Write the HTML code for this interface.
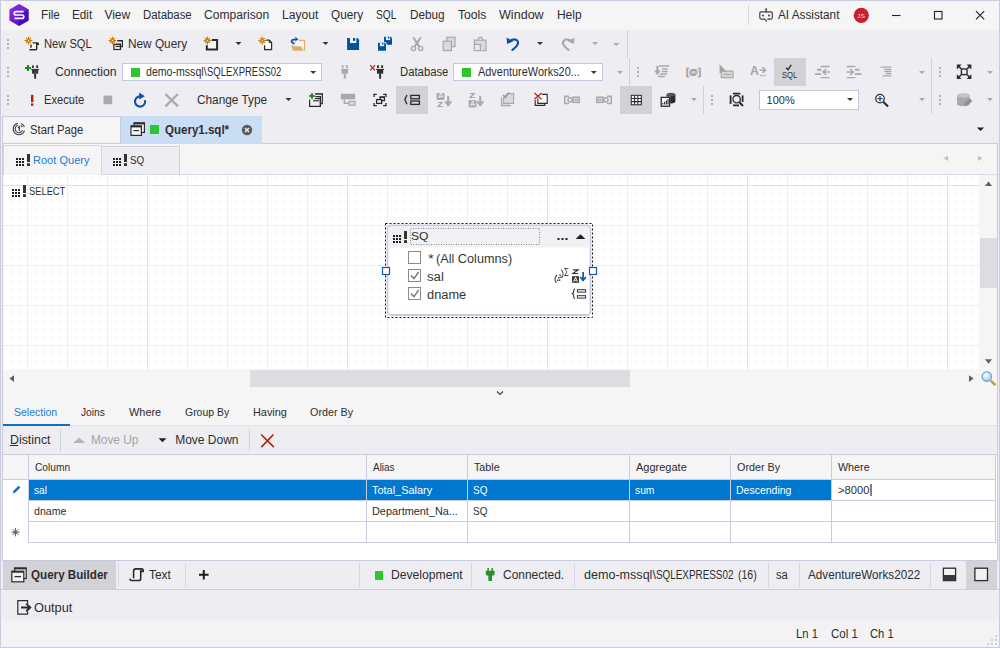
<!DOCTYPE html>
<html lang="en"><head><meta charset="utf-8"><title>dbForge Studio - Query1.sql</title>
<style>
html,body{margin:0;padding:0;background:#eeeef2;}
#w{position:relative;width:1000px;height:648px;overflow:hidden;font-family:"Liberation Sans",sans-serif;}
#w div,#w span,#w svg{position:absolute;}
#w span{white-space:pre;line-height:1;transform-origin:0 0;}
#w svg{overflow:visible;}
</style></head><body><div id="w">
<div style="left:0px;top:0px;width:1000px;height:648px;background-color:#c9cbdf;"></div>
<div style="left:1px;top:1px;width:998px;height:29px;background-color:#f5f5f6;"></div>
<div style="left:1px;top:30px;width:998px;height:86px;background-color:#eeeef2;"></div>
<div style="left:1px;top:116px;width:998px;height:28px;background-color:#eeeef2;"></div>
<div style="left:2px;top:116px;width:119px;height:28px;background-color:#c9cbdf;"></div>
<div style="left:3px;top:117px;width:117px;height:26px;background-color:#f5f5f5;"></div>
<div style="left:2px;top:143px;width:996px;height:1px;background-color:#c9cbdf;"></div>
<div style="left:121px;top:116px;width:141px;height:28px;background-color:#c9def5;"></div>
<div style="left:1px;top:116px;width:1px;height:445px;background-color:#eeeef2;"></div>
<div style="left:998px;top:116px;width:1px;height:445px;background-color:#eeeef2;"></div>
<div style="left:2px;top:116px;width:1px;height:445px;background-color:#c9cbdf;"></div>
<div style="left:997px;top:143px;width:1px;height:418px;background-color:#c9cbdf;"></div>
<div style="left:3px;top:144px;width:994px;height:417px;background-color:#f5f5f5;"></div>
<div style="left:3px;top:144px;width:994px;height:31px;background-color:#f5f5f5;"></div>
<div style="left:3px;top:145px;width:99px;height:30px;background-color:#d4d6e6;"></div>
<div style="left:4px;top:146px;width:97px;height:29px;background-color:#f5f5f5;"></div>
<div style="left:102px;top:146px;width:78px;height:28px;background-color:#cfd1e2;"></div>
<div style="left:102px;top:147px;width:77px;height:27px;background-color:#eeeef2;"></div>
<div style="left:101px;top:174px;width:896px;height:1px;background-color:#d9dbea;"></div>
<div style="left:3px;top:175px;width:977px;height:195px;background-color:#ffffff;background-image:linear-gradient(to right,#e2e2ea 1px,transparent 1px),linear-gradient(to bottom,#e2e2ea 1px,transparent 1px),linear-gradient(to right,#eeeef3 1px,transparent 1px),linear-gradient(to bottom,#eeeef3 1px,transparent 1px),linear-gradient(to right,#f8f8fb 1px,transparent 1px),linear-gradient(to bottom,#f8f8fb 1px,transparent 1px);background-size:200px 200px,200px 200px,40px 40px,40px 40px,8px 8px,8px 8px;background-position:144px 10px,144px 10px,24px 10px,24px 10px,0px 2px,0px 2px;"></div>
<div style="left:980px;top:175px;width:17px;height:195px;background-color:#f5f5f5;"></div>
<div style="left:980px;top:238px;width:17px;height:50px;background-color:#dcdce2;"></div>
<div style="left:3px;top:370px;width:994px;height:56px;background-color:#f5f5f5;"></div>
<div style="left:250px;top:370px;width:380px;height:17px;background-color:#dcdce2;"></div>
<div style="left:3px;top:425px;width:994px;height:1px;background-color:#e2e2ea;"></div>
<div style="left:3px;top:424px;width:67px;height:2px;background-color:#0e70c0;"></div>
<div style="left:3px;top:426px;width:994px;height:29px;background-color:#eeeef2;"></div>
<div style="left:60px;top:429px;width:1px;height:23px;background-color:#d0d1de;"></div>
<div style="left:249px;top:429px;width:1px;height:22px;background-color:#d0d1de;"></div>
<div style="left:3px;top:454px;width:994px;height:107px;background-color:#ffffff;"></div>
<div style="left:3px;top:454px;width:994px;height:1px;background-color:#c9cbdf;"></div>
<div style="left:3px;top:455px;width:993px;height:24px;background-color:#f5f5f5;"></div>
<div style="left:3px;top:479px;width:993px;height:1px;background-color:#c9cbdf;"></div>
<div style="left:28px;top:480px;width:803px;height:20px;background-color:#0078d0;"></div>
<div style="left:28px;top:500px;width:968px;height:1px;background-color:#c9cbdf;"></div>
<div style="left:28px;top:521px;width:968px;height:1px;background-color:#c9cbdf;"></div>
<div style="left:28px;top:542px;width:968px;height:1px;background-color:#c9cbdf;"></div>
<div style="left:28px;top:455px;width:1px;height:88px;background-color:#c9cbdf;"></div>
<div style="left:366px;top:455px;width:1px;height:88px;background-color:#c9cbdf;"></div>
<div style="left:467px;top:455px;width:1px;height:88px;background-color:#c9cbdf;"></div>
<div style="left:629px;top:455px;width:1px;height:88px;background-color:#c9cbdf;"></div>
<div style="left:730px;top:455px;width:1px;height:88px;background-color:#c9cbdf;"></div>
<div style="left:831px;top:455px;width:1px;height:88px;background-color:#c9cbdf;"></div>
<div style="left:995px;top:455px;width:1px;height:88px;background-color:#c9cbdf;"></div>
<div style="left:2px;top:560px;width:996px;height:1px;background-color:#c9cbdf;"></div>
<div style="left:1px;top:561px;width:998px;height:28px;background-color:#eeeef2;"></div>
<div style="left:3px;top:561px;width:113px;height:28px;background-color:#d2d2d7;"></div>
<div style="left:966px;top:561px;width:31px;height:28px;background-color:#d2d2d7;"></div>
<div style="left:2px;top:589px;width:996px;height:1px;background-color:#c9cbdf;"></div>
<div style="left:118px;top:563px;width:1px;height:24px;background-color:#d7d8e4;"></div>
<div style="left:185px;top:563px;width:1px;height:24px;background-color:#d7d8e4;"></div>
<div style="left:359px;top:563px;width:1px;height:24px;background-color:#d7d8e4;"></div>
<div style="left:471px;top:563px;width:1px;height:24px;background-color:#d7d8e4;"></div>
<div style="left:574px;top:563px;width:1px;height:24px;background-color:#d7d8e4;"></div>
<div style="left:768px;top:563px;width:1px;height:24px;background-color:#d7d8e4;"></div>
<div style="left:799px;top:563px;width:1px;height:24px;background-color:#d7d8e4;"></div>
<div style="left:930px;top:563px;width:1px;height:24px;background-color:#d7d8e4;"></div>
<div style="left:1px;top:590px;width:998px;height:30px;background-color:#eeeef2;"></div>
<div style="left:1px;top:620px;width:998px;height:27px;background-color:#f3f3f5;"></div>
<div style="left:748px;top:5px;width:1px;height:20px;background-color:#d5d6e2;"></div>
<div style="left:627px;top:30px;width:1px;height:28px;background-color:#d0d1de;"></div>
<div style="left:629px;top:58px;width:1px;height:28px;background-color:#d0d1de;"></div>
<div style="left:703px;top:86px;width:1px;height:28px;background-color:#d0d1de;"></div>
<div style="left:931px;top:58px;width:1px;height:56px;background-color:#d0d1de;"></div>
<div style="left:774px;top:58px;width:32px;height:28px;background-color:#d2d2d6;"></div>
<div style="left:396px;top:86px;width:32px;height:28px;background-color:#d2d2d6;"></div>
<div style="left:620px;top:86px;width:32px;height:28px;background-color:#d2d2d6;"></div>
<div style="left:122px;top:63px;width:200px;height:18px;background-color:#c3c6e0;"></div>
<div style="left:123px;top:64px;width:198px;height:16px;background-color:#ffffff;"></div>
<div style="left:453px;top:63px;width:150px;height:18px;background-color:#c3c6e0;"></div>
<div style="left:454px;top:64px;width:148px;height:16px;background-color:#ffffff;"></div>
<div style="left:759px;top:90px;width:100px;height:20px;background-color:#c3c6e0;"></div>
<div style="left:760px;top:91px;width:98px;height:18px;background-color:#ffffff;"></div>
<div style="left:131px;top:68px;width:9px;height:9px;background-color:#2ec62e;"></div>
<div style="left:462px;top:68px;width:9px;height:9px;background-color:#2ec62e;"></div>
<div style="left:150px;top:125px;width:9px;height:9px;background-color:#2ec62e;"></div>
<div style="left:374.5px;top:570.5px;width:8.5px;height:9px;background-color:#2ec62e;"></div>
<svg style="left:0;top:0" width="1000" height="648" viewBox="0 0 1000 648"><circle cx="861.3" cy="15.3" r="7.6" fill="#c8202f"/>
<rect x="436.7" y="93.1" width="7.7" height="6.7" fill="#a4a4a4"/><rect x="468.7" y="100.2" width="7.6" height="7.2" fill="#a4a4a4"/>
<rect x="387.5" y="225.5" width="203" height="89.5" rx="3.5" fill="#ffffff" stroke="#c9cbdd" stroke-width="1.8"/>
<path d="M388.3 247.5 V229 Q388.3 226.3 391 226.3 H587 Q589.7 226.3 589.7 229 V247.5 Z" fill="#f1f1f3"/></svg>
<span style="left:40.71px;top:8.84px;font-size:12px;color:#2d2d2d;transform:scaleX(0.9771);">File</span>
<span style="left:71.91px;top:8.84px;font-size:12px;color:#2d2d2d;transform:scaleX(0.9764);">Edit</span>
<span style="left:104.40px;top:8.84px;font-size:12px;color:#2d2d2d;">View</span>
<span style="left:142.93px;top:8.84px;font-size:12px;color:#2d2d2d;transform:scaleX(0.9479);">Database</span>
<span style="left:203.90px;top:8.84px;font-size:12px;color:#2d2d2d;transform:scaleX(1.0077);">Comparison</span>
<span style="left:281.89px;top:8.84px;font-size:12px;color:#2d2d2d;transform:scaleX(1.0102);">Layout</span>
<span style="left:330.71px;top:8.84px;font-size:12px;color:#2d2d2d;transform:scaleX(0.9820);">Query</span>
<span style="left:376.29px;top:8.84px;font-size:12px;color:#2d2d2d;transform:scaleX(0.8494);">SQL</span>
<span style="left:410.21px;top:8.84px;font-size:12px;color:#2d2d2d;transform:scaleX(0.9781);">Debug</span>
<span style="left:458.19px;top:8.84px;font-size:12px;color:#2d2d2d;transform:scaleX(1.0137);">Tools</span>
<span style="left:499.37px;top:8.84px;font-size:12px;color:#2d2d2d;transform:scaleX(1.0471);">Window</span>
<span style="left:556.90px;top:8.84px;font-size:12px;color:#2d2d2d;">Help</span>
<span style="left:777.71px;top:8.84px;font-size:12px;color:#2d2d2d;transform:scaleX(0.9792);">AI Assistant</span>
<span style="left:857.12px;top:12.62px;font-size:6px;color:#f6d4d6;transform:scaleX(1.1261);">JS</span>
<span style="left:43.94px;top:37.84px;font-size:12px;color:#2d2d2d;transform:scaleX(0.9287);">New SQL</span>
<span style="left:127.81px;top:37.84px;font-size:12px;color:#2d2d2d;transform:scaleX(0.9845);">New Query</span>
<span style="left:54.99px;top:65.84px;font-size:12px;color:#2d2d2d;transform:scaleX(1.0145);">Connection</span>
<span style="left:146.37px;top:65.84px;font-size:12px;color:#2d2d2d;transform:scaleX(0.8823);">demo-mssql\</span>
<span style="left:206.73px;top:65.84px;font-size:12px;color:#2d2d2d;transform:scaleX(0.7910);">SQLEXPRESS02</span>
<span style="left:400.23px;top:65.84px;font-size:12px;color:#2d2d2d;transform:scaleX(0.9421);">Database</span>
<span style="left:477.65px;top:65.84px;font-size:12px;color:#2d2d2d;transform:scaleX(0.9111);">AdventureWorks20...</span>
<span style="left:43.94px;top:93.84px;font-size:12px;color:#2d2d2d;transform:scaleX(0.9294);">Execute</span>
<span style="left:197.01px;top:93.84px;font-size:12px;color:#2d2d2d;transform:scaleX(0.9849);">Change Type</span>
<span style="left:766.60px;top:94.69px;font-size:11px;color:#2d2d2d;">100%</span>
<span style="left:30.04px;top:123.84px;font-size:12px;color:#2d2d2d;transform:scaleX(0.9400);">Start Page</span>
<span style="left:165.22px;top:123.84px;font-size:12px;color:#2e2e2e;transform:scaleX(0.9610);font-weight:700;">Query1.sql*</span>
<span style="left:33.10px;top:154.69px;font-size:11px;color:#1c7cd6;transform:scaleX(1.0044);">Root Query</span>
<span style="left:130.06px;top:154.69px;font-size:11px;color:#2d2d2d;transform:scaleX(0.8990);">SQ</span>
<span style="left:29.29px;top:185.69px;font-size:11px;color:#2d2d2d;transform:scaleX(0.8482);">SELECT</span>
<span style="left:411.27px;top:231.27px;font-size:11.5px;color:#2d2d2d;transform:scaleX(1.0466);">SQ</span>
<span style="left:428.26px;top:252.84px;font-size:12px;color:#363636;transform:scaleX(1.2415);">*</span>
<span style="left:436.07px;top:252.84px;font-size:12px;color:#363636;transform:scaleX(1.0581);">(All Columns)</span>
<span style="left:427.04px;top:270.84px;font-size:12px;color:#363636;transform:scaleX(1.0949);">sal</span>
<span style="left:427.06px;top:288.84px;font-size:12px;color:#363636;transform:scaleX(1.0680);">dname</span>
<span style="left:14.13px;top:406.69px;font-size:11px;color:#1c7cd6;transform:scaleX(0.9544);">Selection</span>
<span style="left:81.44px;top:406.69px;font-size:11px;color:#2d2d2d;transform:scaleX(0.9304);">Joins</span>
<span style="left:128.90px;top:406.69px;font-size:11px;color:#2d2d2d;transform:scaleX(0.9936);">Where</span>
<span style="left:184.93px;top:406.69px;font-size:11px;color:#2d2d2d;transform:scaleX(0.9512);">Group By</span>
<span style="left:252.71px;top:406.69px;font-size:11px;color:#2d2d2d;transform:scaleX(0.9898);">Having</span>
<span style="left:310.21px;top:406.69px;font-size:11px;color:#2d2d2d;transform:scaleX(0.9792);">Order By</span>
<span style="left:9.98px;top:433.84px;font-size:12px;color:#2d2d2d;transform:scaleX(1.0294);text-decoration:none">Distinct</span>
<span style="left:91.21px;top:433.84px;font-size:12px;color:#a2a2a2;transform:scaleX(0.9869);">Move Up</span>
<span style="left:175.20px;top:433.84px;font-size:12px;color:#2d2d2d;">Move Down</span>
<span style="left:35.04px;top:461.69px;font-size:11px;color:#2d2d2d;transform:scaleX(0.9260);">Column</span>
<span style="left:373.06px;top:461.69px;font-size:11px;color:#2d2d2d;transform:scaleX(0.9059);">Alias</span>
<span style="left:474.02px;top:461.69px;font-size:11px;color:#2d2d2d;transform:scaleX(0.9735);">Table</span>
<span style="left:636.00px;top:461.69px;font-size:11px;color:#2d2d2d;">Aggregate</span>
<span style="left:737.01px;top:461.69px;font-size:11px;color:#2d2d2d;transform:scaleX(0.9792);">Order By</span>
<span style="left:838.01px;top:461.69px;font-size:11px;color:#2d2d2d;transform:scaleX(0.9751);">Where</span>
<span style="left:34.45px;top:484.69px;font-size:11px;color:#ffffff;transform:scaleX(0.9173);">sal</span>
<span style="left:372.40px;top:484.69px;font-size:11px;color:#ffffff;transform:scaleX(0.9943);">Total_Salary</span>
<span style="left:473.46px;top:484.69px;font-size:11px;color:#ffffff;transform:scaleX(0.9053);">SQ</span>
<span style="left:635.44px;top:484.69px;font-size:11px;color:#ffffff;transform:scaleX(0.9335);">sum</span>
<span style="left:736.43px;top:484.69px;font-size:11px;color:#ffffff;transform:scaleX(0.9536);">Descending</span>
<span style="left:838.39px;top:484.69px;font-size:11px;color:#2d2d2d;transform:scaleX(1.0160);">&gt;8000</span>
<span style="left:34.42px;top:505.69px;font-size:11px;color:#2d2d2d;transform:scaleX(0.9631);">dname</span>
<span style="left:372.41px;top:505.69px;font-size:11px;color:#2d2d2d;transform:scaleX(0.9893);">Department_Na...</span>
<span style="left:473.46px;top:505.69px;font-size:11px;color:#2d2d2d;transform:scaleX(0.9053);">SQ</span>
<span style="left:30.92px;top:568.84px;font-size:12px;color:#2e2e2e;transform:scaleX(0.9690);font-weight:700;">Query Builder</span>
<span style="left:149.20px;top:568.84px;font-size:12px;color:#2d2d2d;transform:scaleX(0.9947);">Text</span>
<span style="left:390.69px;top:568.84px;font-size:12px;color:#2d2d2d;transform:scaleX(1.0125);">Development</span>
<span style="left:502.70px;top:568.84px;font-size:12px;color:#2d2d2d;transform:scaleX(0.9953);">Connected.</span>
<span style="left:583.87px;top:568.84px;font-size:12px;color:#2d2d2d;transform:scaleX(1.0468);">demo-mssql\</span>
<span style="left:656.31px;top:568.84px;font-size:12px;color:#2d2d2d;transform:scaleX(0.8229);">SQLEXPRESS02</span>
<span style="left:737.97px;top:568.84px;font-size:12px;color:#2d2d2d;transform:scaleX(0.8761);">(16)</span>
<span style="left:776.14px;top:568.84px;font-size:12px;color:#2d2d2d;transform:scaleX(0.9300);">sa</span>
<span style="left:807.62px;top:568.84px;font-size:12px;color:#2d2d2d;transform:scaleX(0.9741);">AdventureWorks2022</span>
<span style="left:33.66px;top:601.84px;font-size:12px;color:#2d2d2d;transform:scaleX(1.0657);">Output</span>
<span style="left:796.44px;top:627.84px;font-size:12px;color:#2d2d2d;transform:scaleX(0.9375);">Ln 1</span>
<span style="left:830.73px;top:627.84px;font-size:12px;color:#2d2d2d;transform:scaleX(0.9566);">Col 1</span>
<span style="left:869.94px;top:627.84px;font-size:12px;color:#2d2d2d;transform:scaleX(0.9346);">Ch 1</span>
<span style="left:686.22px;top:67.16px;font-size:9.5px;color:#9c9c9c;transform:scaleX(0.9683);font-weight:700;-webkit-text-stroke:0.35px #9c9c9c;">[@]</span>
<span style="left:750.21px;top:65.42px;font-size:12.5px;color:#a4a4a4;transform:scaleX(0.9855);font-weight:700;">A</span>
<span style="left:782.26px;top:70.60px;font-size:8.5px;color:#333;transform:scaleX(0.8992);">SQL</span>
<span style="left:437.52px;top:93.30px;font-size:6.5px;color:#ececee;transform:scaleX(1.1269);font-weight:700;">A</span>
<span style="left:436.89px;top:100.75px;font-size:7.5px;color:#9c9c9c;transform:scaleX(1.3497);font-weight:700;">Z</span>
<span style="left:468.89px;top:91.55px;font-size:7.5px;color:#9c9c9c;transform:scaleX(1.3497);font-weight:700;">Z</span>
<span style="left:469.52px;top:101.00px;font-size:6.5px;color:#ececee;transform:scaleX(1.1269);font-weight:700;">A</span>
<span style="left:563.53px;top:268.14px;font-size:10px;color:#2a2a2a;transform:scaleX(0.7758);">Σ</span>
<svg style="left:0;top:0" width="1000" height="648" viewBox="0 0 1000 648"><g transform="translate(9,4)"><defs><linearGradient id="lg" x1="0" y1="0" x2="1" y2="1"><stop offset="0" stop-color="#9b2fe8"/><stop offset="1" stop-color="#3a0cb8"/></linearGradient></defs><polygon points="10,0 19.6,5.5 19.6,16.5 10,22 0.4,16.5 0.4,5.5" fill="url(#lg)"/><polygon points="10,0 19.6,5.5 10,11" fill="#7a22dc" opacity=".55"/><polygon points="10,11 19.6,5.5 19.6,16.5 10,22" fill="#3408b0" opacity=".55"/><path d="M14.6 7.6 H7 Q5.2 7.6 5.2 9.3 Q5.2 11 7 11 H13 Q14.8 11 14.8 12.7 Q14.8 14.4 13 14.4 H5.4" fill="none" stroke="#fff" stroke-width="1.7"/></g>
<g transform="translate(759,8)"><g fill="none" stroke="#3e3e3e" stroke-width="1.15" stroke-linecap="round"><path d="M8.7 11.1 H11.8 Q13.3 11.1 13.3 9.6 V5.4 Q13.3 3.9 11.8 3.9 H2.3 Q0.8 3.9 0.8 5.4 V9.6 Q0.8 11.1 2.3 11.1 H5.6 L7.6 13.1"/><line x1="7.1" y1="3.9" x2="7.1" y2="1.6"/></g><circle cx="7.1" cy="1.2" r="1" fill="#3e3e3e"/><circle cx="4" cy="7.4" r="1" fill="#3e3e3e"/><circle cx="10" cy="7.4" r="1" fill="#3e3e3e"/></g>
<line x1="892" y1="15.5" x2="900.5" y2="15.5" stroke="#222" stroke-width="1.1"/>
<rect x="934.5" y="11.5" width="7.5" height="7.5" fill="none" stroke="#222" stroke-width="1.1"/>
<path d="M976 11.2 L984.2 19.4 M984.2 11.2 L976 19.4" stroke="#222" stroke-width="1.15" fill="none"/>
<rect x="7" y="39" width="2" height="2" fill="#b2b2ba"/>
<rect x="7" y="43" width="2" height="2" fill="#b2b2ba"/>
<rect x="7" y="47" width="2" height="2" fill="#b2b2ba"/>
<g transform="translate(24,36)"><g stroke="#c8790c" stroke-width="1.25" fill="none" stroke-linecap="round"><line x1="4.50" y1="1.10" x2="4.50" y2="7.90"/><line x1="1.10" y1="4.50" x2="7.90" y2="4.50"/><line x1="2.43" y1="2.43" x2="6.57" y2="6.57"/><line x1="6.57" y1="2.43" x2="2.43" y2="6.57"/></g><circle cx="4.5" cy="4.5" r="0.7" fill="#f4ead8"/><rect x="7.4" y="7.2" width="5" height="6" fill="#f6f6f6"/><path d="M7 11.8 V8.6 M8.6 6.9 H13.2 Q14.5 6.9 14.5 8.4 H13 M12.7 7.2 V13 Q12.7 13.7 11.8 13.7 H5.4" fill="none" stroke="#2b2b2b" stroke-width="1.4"/></g>
<g transform="translate(108,36)"><g stroke="#c8790c" stroke-width="1.25" fill="none" stroke-linecap="round"><line x1="4.50" y1="1.10" x2="4.50" y2="7.90"/><line x1="1.10" y1="4.50" x2="7.90" y2="4.50"/><line x1="2.43" y1="2.43" x2="6.57" y2="6.57"/><line x1="6.57" y1="2.43" x2="2.43" y2="6.57"/></g><circle cx="4.5" cy="4.5" r="0.7" fill="#f4ead8"/><g fill="none" stroke="#2b2b2b" stroke-width="1.2"><path d="M14.4 4.6 V10.6 H13"/><rect x="5.9" y="8.3" width="6.6" height="5.2"/><line x1="7.6" y1="10.4" x2="12" y2="10.4"/></g><rect x="9.3" y="4" width="5.7" height="1.5" fill="#2b2b2b"/><rect x="8" y="7.7" width="5.1" height="1.3" fill="#2b2b2b"/></g>
<g transform="translate(204,36)"><rect x="3" y="4" width="10" height="9.6" fill="#f4f4f6"/><g stroke="#c8790c" stroke-width="1.25" fill="none" stroke-linecap="round"><line x1="3.40" y1="1.20" x2="3.40" y2="8.00"/><line x1="0.00" y1="4.60" x2="6.80" y2="4.60"/><line x1="1.33" y1="2.53" x2="5.47" y2="6.67"/><line x1="5.47" y1="2.53" x2="1.33" y2="6.67"/></g><circle cx="3.4" cy="4.6" r="0.7" fill="#f4ead8"/><path d="M7.8 4 H13.1 V13.6 H2.8 V9.2" fill="none" stroke="#2b2b2b" stroke-width="2"/></g>
<polygon points="235.5,42 241.5,42 238.5,45.1" fill="#333333"/>
<g transform="translate(258,36)"><g stroke="#c8790c" stroke-width="1.25" fill="none" stroke-linecap="round"><line x1="4.30" y1="1.10" x2="4.30" y2="7.90"/><line x1="0.90" y1="4.50" x2="7.70" y2="4.50"/><line x1="2.23" y1="2.43" x2="6.37" y2="6.57"/><line x1="6.37" y1="2.43" x2="2.23" y2="6.57"/></g><circle cx="4.3" cy="4.5" r="0.7" fill="#f4ead8"/><path d="M6.6 9.2 V13.6 H13.6 V6.6 L11.2 4.2 H8.2" fill="#fafafa" stroke="#2b2b2b" stroke-width="1.2"/><path d="M11.2 4.2 V6.6 H13.6" fill="none" stroke="#2b2b2b" stroke-width="1"/></g>
<g transform="translate(290,36)"><path d="M9 4.4 H13.6 Q14.5 4.4 14.5 5.3 V14.6" fill="none" stroke="#d9b068" stroke-width="1.3"/><rect x="6" y="5.4" width="7.8" height="5" fill="#f5f5f5"/><polygon points="1.2,10.2 10.8,10.2 13.6,14.8 3,14.8" fill="#d9b068"/><rect x="2" y="9" width="1.2" height="1.6" fill="#d9b068"/><path d="M3.8 7.4 Q0.4 6 2.2 4.2 Q3.4 3.2 6.4 3.3" fill="none" stroke="#0a50a8" stroke-width="1.7" stroke-linecap="round"/><polygon points="4.7,0.6 8.4,3.2 4.7,5.8 6.3,3.2" fill="#0a50a8"/></g>
<polygon points="322.5,42 328.5,42 325.5,45.1" fill="#333333"/>
<g transform="translate(345,36)"><path d="M2.1 2 H12.3 L14.1 3.8 V14 H2.1 Z" fill="#044fa0"/><rect x="4.98" y="2" width="6.36" height="5.04" fill="#f6f6f9"/><rect x="7.98" y="2" width="2.16" height="2.88" fill="#044fa0"/></g>
<g transform="translate(377,36)"><path d="M7 0.7 H13.8 L15 1.9 V8.7 H7 Z" fill="#044fa0"/><rect x="8.92" y="0.7" width="4.24" height="3.36" fill="#f6f6f9"/><rect x="10.92" y="0.7" width="1.44" height="1.92" fill="#044fa0"/><path d="M0.4 6 H8.6 L9.8 7.4 V15.4 H0.4 Z" fill="#f2f2f6"/><path d="M1 6.8 H7.8 L9 8 V14.8 H1 Z" fill="#044fa0"/><rect x="2.92" y="6.8" width="4.24" height="3.36" fill="#f6f6f9"/><rect x="4.92" y="6.8" width="1.44" height="1.92" fill="#044fa0"/></g>
<g transform="translate(409,36)"><g fill="none" stroke="#a9a9a9"><path d="M4.2 1.4 L10.4 10.6 M11.8 1.4 L5.6 10.6" stroke-width="1.9"/><circle cx="4.5" cy="12.5" r="2.1" stroke-width="1.4"/><circle cx="11.6" cy="12.5" r="2.1" stroke-width="1.4"/></g></g>
<g transform="translate(441,36)"><rect x="5.8" y="1.2" width="8.2" height="9.4" fill="#dadada" stroke="#a9a9a9" stroke-width="1.2"/><rect x="2.2" y="5.2" width="8.2" height="9.4" fill="#dadada" stroke="#a9a9a9" stroke-width="1.2"/></g>
<g transform="translate(473,36)"><rect x="1.4" y="4.2" width="11.6" height="10.4" fill="#dadada"/><path d="M1.4 8 V4.2 H13 V14.6 H8.4" fill="none" stroke="#a9a9a9" stroke-width="1.2"/><path d="M5.2 4 Q5.2 1 7.4 1 Q9.6 1 9.6 4" fill="#dadada" stroke="#a9a9a9" stroke-width="1.1"/><rect x="1.4" y="8.4" width="6" height="6.2" fill="#e9e9ec" stroke="#a9a9a9" stroke-width="1.2"/></g>
<g transform="translate(505,36)"><path d="M4.4 5.4 Q9.4 1.6 12.4 4.8 Q15 8.6 7.4 13.8" fill="none" stroke="#0e4f9e" stroke-width="2.1" stroke-linecap="round"/><polygon points="1.6,1.4 2,8 8.2,5.6" fill="#0e4f9e"/></g>
<polygon points="537,42 543,42 540,45.1" fill="#333333"/>
<g transform="translate(576,36)"><g transform="scale(-1,1)"><path d="M4.4 5.4 Q9.4 1.6 12.4 4.8 Q15 8.6 7.4 13.8" fill="none" stroke="#a9a9a9" stroke-width="2.1" stroke-linecap="round"/><polygon points="1.6,1.4 2,8 8.2,5.6" fill="#a9a9a9"/></g></g>
<polygon points="592,42 598,42 595,45.1" fill="#a9a9a9"/>
<polygon points="613.3,43 619.3,43 616.3,46.1" fill="#a9a9a9"/>
<rect x="7" y="67" width="2" height="2" fill="#b2b2ba"/>
<rect x="7" y="71" width="2" height="2" fill="#b2b2ba"/>
<rect x="7" y="75" width="2" height="2" fill="#b2b2ba"/>
<g transform="translate(24,64)"><path d="M4 1 V7 M1 4 H7" stroke="#1e8a1e" stroke-width="2" fill="none"/><rect x="8" y="1.2" width="1.9" height="2.7" rx="0.5" fill="#383838"/><rect x="12.2" y="1.2" width="1.9" height="2.7" rx="0.5" fill="#383838"/><rect x="7.1" y="4.9" width="8" height="1.1" fill="#383838"/><rect x="8" y="5.8" width="6.2" height="3.9" fill="#383838"/><rect x="10.1" y="9.6" width="2" height="5.1" fill="#383838"/></g>
<g transform="translate(337,64)"><rect x="4.7" y="1.2" width="1.9" height="2.7" rx="0.5" fill="#a9a9a9"/><rect x="8.9" y="1.2" width="1.9" height="2.7" rx="0.5" fill="#a9a9a9"/><rect x="3.8" y="4.9" width="8" height="1.1" fill="#a9a9a9"/><rect x="4.7" y="5.8" width="6.2" height="3.9" fill="#a9a9a9"/><rect x="6.8" y="9.6" width="2" height="5.1" fill="#a9a9a9"/></g>
<g transform="translate(369,64)"><path d="M1.2 1.2 L6 6.4 M6 1.2 L1.2 6.4" stroke="#b5200d" stroke-width="1.2" fill="none"/><rect x="8" y="1.2" width="1.9" height="2.7" rx="0.5" fill="#2e2e2e"/><rect x="12.2" y="1.2" width="1.9" height="2.7" rx="0.5" fill="#2e2e2e"/><rect x="7.1" y="4.9" width="8" height="1.1" fill="#2e2e2e"/><rect x="8" y="5.8" width="6.2" height="3.9" fill="#2e2e2e"/><rect x="10.1" y="9.6" width="2" height="5.1" fill="#2e2e2e"/></g>
<polygon points="310.2,71 316.2,71 313.2,74.1" fill="#3a3a3a"/>
<polygon points="590.8,71 596.8,71 593.8,74.1" fill="#3a3a3a"/>
<polygon points="617,71 623,71 620,74.1" fill="#a9a9a9"/>
<rect x="637" y="67" width="2" height="2" fill="#b2b2ba"/>
<rect x="637" y="71" width="2" height="2" fill="#b2b2ba"/>
<rect x="637" y="75" width="2" height="2" fill="#b2b2ba"/>
<g transform="translate(654,64)"><g stroke="#a9a9a9" fill="none"><path d="M3.4 1.8 V8.4" stroke-width="2.1"/><path d="M5 2 H15.2 M8 5 H13.5 M8 7.5 H14 M6 10 H13 M4 12.5 H11" stroke-width="1.35"/></g><polygon points="0.2,6.6 6.6,6.6 3.4,11.2" fill="#a9a9a9"/></g>
<g transform="translate(718,64)"><rect x="3.4" y="7.2" width="11.6" height="6.4" fill="#dadada" stroke="#a9a9a9" stroke-width="1.3"/><line x1="6" y1="10.4" x2="13" y2="10.4" stroke="#a9a9a9" stroke-width="1.3"/><polygon points="1.6,0.6 1.6,9.8 4,7.6 8.2,7.2" fill="#a2a2a2"/></g>
<g transform="translate(750,64)"><path d="M9.6 6.2 H15 M12.6 3.4 L15.4 6.2 L12.6 9" fill="none" stroke="#a9a9a9" stroke-width="1.6"/><path d="M10 11.5 H15.6" stroke="#a9a9a9" stroke-width="1.3" stroke-dasharray="1.3 0.9"/></g>
<g transform="translate(782,64)"><path d="M4.2 3.8 L6 5.8 L9.2 0.8" fill="none" stroke="#222" stroke-width="1.3"/></g>
<g stroke="#a9a9a9" fill="none"><path d="M820.6 66.5 H829.6 M820.6 77.6 H829.6" stroke-width="1.4"/><path d="M817 69.8 H821.2 M814.8 74.1 H821.2" stroke-width="1.9"/><path d="M823.4 72 H829.8 M826.2 69 L823 72 L826.2 75" stroke-width="1.6"/></g>
<g stroke="#a9a9a9" fill="none"><path d="M846.7 66.5 H855.4 M846.7 77.6 H855.4" stroke-width="1.4"/><path d="M855 69.8 H859.4 M855 74.1 H861.4" stroke-width="1.9"/><path d="M846.5 72 H853 M850 69 L853.3 72 L850 75" stroke-width="1.6"/></g>
<g stroke="#a9a9a9" fill="none" stroke-width="1.3"><path d="M880.5 67.2 H891.4 M884.2 69.4 H891.4 M884.2 71.5 H891.4 M886 73.7 H891.4 M882.6 75.9 H891.4"/></g>
<polygon points="919,71 925,71 922,74.1" fill="#a9a9a9"/>
<rect x="939" y="67" width="2" height="2" fill="#b2b2ba"/>
<rect x="939" y="71" width="2" height="2" fill="#b2b2ba"/>
<rect x="939" y="75" width="2" height="2" fill="#b2b2ba"/>
<g transform="translate(956,64)"><rect x="5.4" y="5" width="5.6" height="5.6" fill="none" stroke="#2b2b2b" stroke-width="1.4"/><g stroke="#2b2b2b" stroke-width="1.6" fill="none"><path d="M5 4.6 L2.2 1.8 M11.4 4.6 L14.2 1.8 M5 11 L2.2 13.8 M11.4 11 L14.2 13.8"/></g><g fill="#2b2b2b"><polygon points="0.8,0.6 5.6,0.6 0.8,5.4"/><polygon points="15.4,0.6 10.6,0.6 15.4,5.4"/><polygon points="0.8,15 5.6,15 0.8,10.2"/><polygon points="15.4,15 10.6,15 15.4,10.2"/></g></g>
<polygon points="987,71 993,71 990,74.1" fill="#a9a9a9"/>
<rect x="7" y="95" width="2" height="2" fill="#b2b2ba"/>
<rect x="7" y="99" width="2" height="2" fill="#b2b2ba"/>
<rect x="7" y="103" width="2" height="2" fill="#b2b2ba"/>
<g transform="translate(24,92)"><rect x="7" y="2.8" width="2.4" height="7.4" fill="#b5200d"/><rect x="7" y="11.4" width="2.4" height="2.4" fill="#b5200d"/></g>
<rect x="103.5" y="95.6" width="8.7" height="8.6" fill="#a9a9a9"/>
<path d="M145 100.2 A5.1 5.1 0 1 1 139.6 96.4" fill="none" stroke="#0b50a2" stroke-width="2.1"/><polygon points="139.2,92.6 144.8,96.2 139.2,99.6" fill="#0b50a2"/>
<g transform="translate(164,92)"><path d="M1.4 2 L14 14.4 M14 2 L1.4 14.4" stroke="#a9a9a9" stroke-width="2.2" fill="none"/></g>
<polygon points="285.5,98 291.5,98 288.5,101.1" fill="#333333"/>
<g transform="translate(308,92)"><g fill="none" stroke="#2b2b2b" stroke-width="1.2"><path d="M14.3 1.4 V11.6 H12.8"/><path d="M7.4 4.6 H12.4 V14.2"/><rect x="1.6" y="6.6" width="10.8" height="7.8"/><line x1="5" y1="8.8" x2="11" y2="8.8" stroke-width="1.1"/></g><rect x="7" y="1.2" width="7.9" height="1.5" fill="#2b2b2b"/><rect x="0" y="0.4" width="7" height="7.2" fill="#eeeef2"/><path d="M4 1.2 V6.8 M1.2 4 H6.8" stroke="#1e8a1e" stroke-width="2" fill="none"/></g>
<g transform="translate(340,92)"><rect x="0.8" y="1.8" width="14.4" height="5.6" fill="#a9a9a9"/><path d="M4.4 7.4 V11.2 H8.6" fill="none" stroke="#a9a9a9" stroke-width="1.4"/><rect x="9" y="9.4" width="6" height="3.8" fill="#dadada" stroke="#a9a9a9" stroke-width="1.2"/></g>
<g transform="translate(372,92)"><g fill="none" stroke="#2b2b2b" stroke-width="1.3"><path d="M2 5 V2.3 H4.8 M11.2 2.3 H14 V5 M14 11 V13.7 H11.2 M4.8 13.7 H2 V11"/><rect x="8" y="5" width="4.4" height="3.6" fill="#f4f4f6"/><rect x="4.6" y="7.6" width="5" height="3.8" fill="#f4f4f6"/></g><rect x="8" y="4.6" width="4.4" height="1.3" fill="#2b2b2b"/></g>
<g transform="translate(404,92)"><g fill="none" stroke="#2b2b2b" stroke-width="1.3"><path d="M3 3 L0.8 7.6 L3 12.2"/><rect x="6.8" y="3.4" width="8.6" height="3.4"/><rect x="6.8" y="9" width="8.6" height="3.4"/></g></g>
<g transform="translate(436,92)"><path d="M12.2 3.8 V12 M9.2 9.4 L12.2 13 L15.2 9.4" fill="none" stroke="#a9a9a9" stroke-width="2.1"/></g>
<g transform="translate(468,92)"><path d="M12.2 3.8 V12 M9.2 9.4 L12.2 13 L15.2 9.4" fill="none" stroke="#a9a9a9" stroke-width="2.1"/></g>
<g transform="translate(500,92)"><path d="M1.4 5.4 V13.6 H11 M3.6 11.4 H13.6 V1.6 H7.4 L3.6 5.4 Z" fill="#dadada" stroke="#a9a9a9" stroke-width="1.1"/><path d="M3 3 L5.4 5.6 L9 0.4" fill="none" stroke="#9a9a9a" stroke-width="1.5"/></g>
<g transform="translate(532,92)"><g fill="#fafafa" stroke="#2b2b2b" stroke-width="1.1"><path d="M3.2 8 V13.4 H12.8 V11.6"/><path d="M5.8 6.4 V11.4 H15.2 V2.4 H10"/></g><path d="M2.4 1 L9.6 7.2 M9.6 1 L2.4 7.2" stroke="#b5200d" stroke-width="1.15" fill="none"/></g>
<g transform="translate(564,92)"><g fill="none" stroke="#a9a9a9" stroke-width="1.5"><path d="M5 4.2 H0.8 V11.4 H5"/><circle cx="6" cy="7.8" r="2.1"/><rect x="9" y="5.2" width="6.2" height="5.2" fill="#dadada"/><line x1="10.6" y1="7.8" x2="13.6" y2="7.8"/></g></g>
<g transform="translate(612,92)"><g transform="scale(-1,1)"><g fill="none" stroke="#a9a9a9" stroke-width="1.5"><path d="M5 4.2 H0.8 V11.4 H5"/><circle cx="6" cy="7.8" r="2.1"/><rect x="9" y="5.2" width="6.2" height="5.2" fill="#dadada"/><line x1="10.6" y1="7.8" x2="13.6" y2="7.8"/></g></g></g>
<g transform="translate(628,92)"><rect x="2.4" y="2.6" width="11.6" height="10.8" fill="#fff"/><g fill="none" stroke="#2b2b2b" stroke-width="1.1"><rect x="3.2" y="3.3" width="10.1" height="9.5"/><path d="M6.6 3.3 V12.8 M9.9 3.3 V12.8 M3.2 6.5 H13.3 M3.2 9.6 H13.3"/></g></g>
<g transform="translate(660,92)"><path d="M6.6 2.6 V9.6 Q6.6 11.4 11 11.4 Q15.4 11.4 15.4 9.6 V2.6 Z" fill="#2b2b2b"/><ellipse cx="11" cy="2.6" rx="4.4" ry="1.8" fill="#555"/><rect x="0.6" y="4.6" width="9.6" height="10" fill="#eeeef2"/><rect x="1.2" y="5.4" width="8.4" height="8.8" fill="#fff" stroke="#2b2b2b" stroke-width="1.3"/><path d="M2.8 12.6 V11 M4.6 12.6 V9.8 M6.4 12.6 V8.4 M8 12.6 V7" stroke="#2b2b2b" stroke-width="1.1"/></g>
<polygon points="691,98 697,98 694,101.1" fill="#a9a9a9"/>
<rect x="711" y="95" width="2" height="2" fill="#b2b2ba"/>
<rect x="711" y="99" width="2" height="2" fill="#b2b2ba"/>
<rect x="711" y="103" width="2" height="2" fill="#b2b2ba"/>
<g transform="translate(728,92)"><g fill="none" stroke="#2b2b2b"><path d="M2.6 3.4 V12" stroke-width="1.8"/><path d="M14.6 3.4 V10" stroke-width="1.8"/><path d="M5 1.6 H12.4 M5 13.4 H11" stroke-width="1.6"/><circle cx="8.6" cy="7.2" r="3.7" stroke-width="1.3" fill="#eeeef2"/><path d="M11.2 10 L15 14" stroke-width="1.9"/></g></g>
<polygon points="847,98 853,98 850,101.1" fill="#3a3a3a"/>
<g transform="translate(873,92)"><circle cx="7" cy="6.6" r="4.3" fill="#fafafa" stroke="#2b2b2b" stroke-width="1.2"/><path d="M10.2 9.8 L15 14.6" stroke="#2b2b2b" stroke-width="2.1"/><path d="M7 4 V9.2 M4.4 6.6 H9.6" stroke="#0e58b0" stroke-width="1.4"/></g>
<polygon points="919,98 925,98 922,101.1" fill="#a9a9a9"/>
<rect x="939" y="95" width="2" height="2" fill="#b2b2ba"/>
<rect x="939" y="99" width="2" height="2" fill="#b2b2ba"/>
<rect x="939" y="103" width="2" height="2" fill="#b2b2ba"/>
<g transform="translate(956,92)"><path d="M1 3.4 V11.6 Q1 14.2 7.4 14.2 Q13.8 14.2 13.8 11.6 V3.4 Z" fill="#a9a9a9"/><ellipse cx="7.4" cy="3.4" rx="6.4" ry="2.4" fill="#c4c4c4"/><rect x="8" y="8.6" width="8" height="3.6" fill="#8e8e8e" transform="rotate(-38 12 10.4)"/></g>
<polygon points="987,98 993,98 990,101.1" fill="#a9a9a9"/>
<path d="M17.79 123.23 A5.8 5.8 0 1 0 24.52 130.69 M21.17 123.52 A5.8 5.8 0 0 1 24.38 126.73 M17.83 125.29 A3.8 3.8 0 1 0 22.52 130.32 M20.78 125.54 A3.8 3.8 0 0 1 22.29 127.00" fill="none" stroke="#3c3c3c" stroke-width="1.05"/><path d="M17.9 127.6 L19.3 126.8 V131" fill="none" stroke="#2a2a2a" stroke-width="1.1"/>
<g transform="translate(130,122)"><g fill="#f8f8fa" stroke="#2b2b2b" stroke-width="1.2"><rect x="4" y="0.8" width="10.4" height="9.6"/><rect x="1" y="3.8" width="10.4" height="9.6"/></g><rect x="4" y="0.8" width="10.4" height="1.6" fill="#2b2b2b"/><rect x="1" y="3.8" width="10.4" height="1.6" fill="#2b2b2b"/><line x1="3.4" y1="8.6" x2="9" y2="8.6" stroke="#2b2b2b" stroke-width="1.2"/></g>
<circle cx="247" cy="130" r="5.2" fill="#5a5a5a"/><path d="M245 128 L249 132 M249 128 L245 132" stroke="#e8eef8" stroke-width="1.5"/>
<polygon points="976.9,127.5 984.1,127.5 980.5,130.9" fill="#1e1e1e"/>
<g transform="translate(16,154)"><g fill="#1e1e1e"><rect x="0" y="4" width="2" height="2"/><rect x="0" y="7" width="2" height="2"/><rect x="0" y="10" width="2" height="2"/><rect x="3" y="4" width="2" height="2"/><rect x="3" y="7" width="2" height="2"/><rect x="3" y="10" width="2" height="2"/><rect x="6" y="4" width="2" height="2"/><rect x="6" y="7" width="2" height="2"/><rect x="6" y="10" width="2" height="2"/></g><rect x="11" y="0" width="3" height="8" fill="#333"/><rect x="11" y="9.2" width="3" height="2.8" fill="#333"/></g>
<g transform="translate(113,154)"><g fill="#1e1e1e"><rect x="0" y="4" width="2" height="2"/><rect x="0" y="7" width="2" height="2"/><rect x="0" y="10" width="2" height="2"/><rect x="3" y="4" width="2" height="2"/><rect x="3" y="7" width="2" height="2"/><rect x="3" y="10" width="2" height="2"/><rect x="6" y="4" width="2" height="2"/><rect x="6" y="7" width="2" height="2"/><rect x="6" y="10" width="2" height="2"/></g><rect x="11" y="0" width="3" height="8" fill="#333"/><rect x="11" y="9.2" width="3" height="2.8" fill="#333"/></g>
<g transform="translate(12,185)"><g fill="#1e1e1e"><rect x="0" y="4" width="2" height="2"/><rect x="0" y="7" width="2" height="2"/><rect x="0" y="10" width="2" height="2"/><rect x="3" y="4" width="2" height="2"/><rect x="3" y="7" width="2" height="2"/><rect x="3" y="10" width="2" height="2"/><rect x="6" y="4" width="2" height="2"/><rect x="6" y="7" width="2" height="2"/><rect x="6" y="10" width="2" height="2"/></g><rect x="11" y="0" width="3" height="8" fill="#333"/><rect x="11" y="9.2" width="3" height="2.8" fill="#333"/></g>
<g transform="translate(393,231)"><g fill="#1e1e1e"><rect x="0" y="4" width="2" height="2"/><rect x="0" y="7" width="2" height="2"/><rect x="0" y="10" width="2" height="2"/><rect x="3" y="4" width="2" height="2"/><rect x="3" y="7" width="2" height="2"/><rect x="3" y="10" width="2" height="2"/><rect x="6" y="4" width="2" height="2"/><rect x="6" y="7" width="2" height="2"/><rect x="6" y="10" width="2" height="2"/></g><rect x="11" y="0" width="3" height="8" fill="#333"/><rect x="11" y="9.2" width="3" height="2.8" fill="#333"/></g>
<polygon points="948,155.5 948,161 943.6,158.2" fill="#c2c2c2"/><polygon points="978,155.5 978,161 982.4,158.2" fill="#c2c2c2"/>
<polygon points="985,186 992,186 988.5,181.4" fill="#606060"/><polygon points="985,359.2 992,359.2 988.5,363.8" fill="#606060"/>
<polygon points="14,375.2 14,382 9.4,378.6" fill="#606060"/><polygon points="969,375.2 969,382 973.6,378.6" fill="#606060"/>
<defs><radialGradient id="mg" cx=".4" cy=".35" r=".7"><stop offset="0" stop-color="#fff"/><stop offset="1" stop-color="#9cc4ea"/></radialGradient></defs><path d="M990.6 380.6 L995.4 385.2" stroke="#c89a3a" stroke-width="2.4"/><circle cx="986.8" cy="376.6" r="4.7" fill="url(#mg)" stroke="#6f9fd0" stroke-width="1.2"/>
<path d="M497 391.6 L500 394.4 L503 391.6" fill="none" stroke="#444" stroke-width="1.3"/>
<rect x="385.5" y="223.5" width="207" height="94" fill="none" stroke="#111" stroke-width="1" stroke-dasharray="2 2"/>
<rect x="410.5" y="228.5" width="129" height="16" fill="none" stroke="#8c8c8c" stroke-width="1" stroke-dasharray="1 1.5"/>
<rect x="557.5" y="238" width="2" height="2" fill="#1e1e1e"/>
<rect x="561.5" y="238" width="2" height="2" fill="#1e1e1e"/>
<rect x="565.5" y="238" width="2" height="2" fill="#1e1e1e"/>
<polygon points="575.6,239 585.4,239 580.5,234.2" fill="#1e1e1e"/>
<rect x="408.5" y="251.5" width="12" height="12" fill="#fff" stroke="#8a8a8a" stroke-width="1"/>
<rect x="408.5" y="269.5" width="12" height="12" fill="#fff" stroke="#8a8a8a" stroke-width="1"/>
<rect x="408.5" y="287.5" width="12" height="12" fill="#fff" stroke="#8a8a8a" stroke-width="1"/>
<path d="M411 275.6 L414 278.6 L418.6 272" fill="none" stroke="#7c7c7c" stroke-width="1.5"/>
<path d="M411 293.6 L414 296.6 L418.6 290" fill="none" stroke="#7c7c7c" stroke-width="1.5"/>
<rect x="382.5" y="267.5" width="7" height="7" fill="#fff" stroke="#1a56a8" stroke-width="1.2"/>
<rect x="589.5" y="267.5" width="7" height="7" fill="#fff" stroke="#1a56a8" stroke-width="1.2"/>
<g fill="none" stroke="#444" stroke-width="1.05"><path d="M556.9 274.9 Q553.4 279 556.3 282.9"/><path d="M561.3 269.7 Q564.6 273.6 561.9 277.6"/></g>
<rect x="556.9" y="279.6" width="1.5" height="1.5" fill="#3a3a3a"/>
<rect x="558.1" y="277" width="1.5" height="1.5" fill="#3a3a3a"/>
<rect x="559.3" y="274.4" width="1.5" height="1.5" fill="#3a3a3a"/>
<rect x="558.8" y="279.4" width="1.5" height="1.5" fill="#3a3a3a"/>
<rect x="560.2" y="276.6" width="1.5" height="1.5" fill="#3a3a3a"/>
<path d="M573 269.9 H578 L573 273.5 H578.2" fill="none" stroke="#333" stroke-width="1.2"/>
<rect x="572" y="276.2" width="7" height="6.6" fill="#3a3a3a"/><path d="M573.6 281.8 L575.5 277.2 L577.4 281.8 M574.3 280.3 H576.7" fill="none" stroke="#fff" stroke-width="0.9"/>
<path d="M583.1 272 V279.6 M580.3 277 L583.1 280.4 L585.9 277" fill="none" stroke="#0e58b0" stroke-width="1.7"/>
<g fill="none" stroke="#333" stroke-width="1.1"><path d="M575 289 Q573.5 289.2 573.7 291.2 Q573.9 293.2 572.4 293.8 Q573.9 294.4 573.7 296.4 Q573.5 298.4 575 298.6"/><rect x="577.4" y="289.7" width="8.2" height="2.4" fill="#fff" stroke-width="1"/><rect x="577.4" y="295.7" width="8.2" height="2.4" fill="#fff" stroke-width="1"/></g>
<rect x="10" y="445" width="8.2" height="1" fill="#2a2a2a"/>
<polygon points="73,443 85.4,443 79.2,437.8" fill="#b4b4b4"/>
<polygon points="158.6,438.2 166.4,438.2 162.5,442.2" fill="#1e1e1e"/>
<path d="M261.6 435 L273.4 446.6 M273 435 L261.8 446.6" stroke="#a8280f" stroke-width="1.7" fill="none" stroke-linecap="round"/>
<path d="M12.6 493.6 L13.6 490.6 L18.6 485.8 L20.4 487.6 L15.4 492.6 Z" fill="#1a6fc4"/>
<g stroke="#6a6a6a" stroke-width="1"><path d="M15.5 528 V536.4 M11.3 532.2 H19.7 M12.6 529.3 L18.4 535.1 M18.4 529.3 L12.6 535.1"/></g><circle cx="15.5" cy="532.2" r="1.9" fill="#6a6a6a"/>
<rect x="870.5" y="484" width="1" height="12" fill="#000"/>
<g transform="translate(11,567)"><g fill="#f2f2f4" stroke="#2b2b2b" stroke-width="1.2"><rect x="3.6" y="0.9" width="11.6" height="10.6"/><rect x="0.8" y="4.2" width="12" height="10.6"/></g><rect x="3.6" y="0.9" width="11.6" height="1.5" fill="#2b2b2b"/><rect x="0.8" y="4.2" width="12" height="1.5" fill="#2b2b2b"/><line x1="3.6" y1="9.6" x2="10" y2="9.6" stroke="#2b2b2b" stroke-width="1.3"/></g>
<g transform="translate(129,567)"><rect x="5" y="2.4" width="6.4" height="10.4" fill="#f4f4f6"/><path d="M4.6 11.2 V4.2 Q4.6 1.9 6.8 1.9 H12.6 Q14.4 1.9 14.2 4.4 H12.4 M11.7 3 V11.4 Q11.7 13.5 9.6 13.5 H2.4 Q0.9 13.5 1 11.6" fill="none" stroke="#2b2b2b" stroke-width="1.6"/></g>
<path d="M203.8 570 V579.6 M199 574.8 H208.6" stroke="#1e1e1e" stroke-width="2" fill="none"/>
<g fill="#2a8f2a"><rect x="487.4" y="568" width="1.5" height="3.4"/><rect x="491.4" y="568" width="1.5" height="3.4"/><path d="M485.8 570.8 H494.6 V574 Q494.6 575.6 492 575.8 V581 H488.4 V575.8 Q485.8 575.6 485.8 574 Z"/></g>
<rect x="943.4" y="568.2" width="12.2" height="12.4" fill="#f4f4f4" stroke="#2b2b2b" stroke-width="1.3"/><rect x="943.4" y="575" width="12.2" height="5.6" fill="#3a3a3a"/>
<rect x="974.9" y="568.2" width="12.6" height="12.4" fill="#f2f2f2" stroke="#2b2b2b" stroke-width="1.3"/>
<g fill="none" stroke="#2b2b2b"><path d="M27.6 603.4 V600.6 H17.8 V614.2 H27.6 V611.4" stroke-width="1.2"/><path d="M21 607.4 H29.6 M26.2 603.6 L30.2 607.4 L26.2 611.2" stroke-width="2"/></g>
<rect x="995" y="635" width="2" height="2" fill="#cfcfdc"/>
<rect x="991" y="639" width="2" height="2" fill="#cfcfdc"/>
<rect x="995" y="639" width="2" height="2" fill="#cfcfdc"/>
<rect x="987" y="643" width="2" height="2" fill="#cfcfdc"/>
<rect x="991" y="643" width="2" height="2" fill="#cfcfdc"/>
<rect x="995" y="643" width="2" height="2" fill="#cfcfdc"/></svg>
</div></body></html>
